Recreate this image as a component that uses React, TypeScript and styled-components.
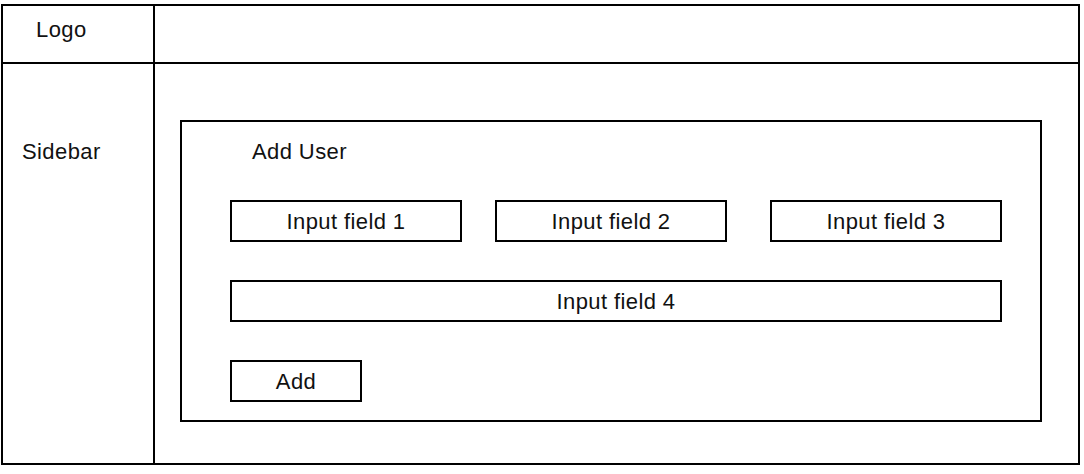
import React from 'react';
import styled, { createGlobalStyle } from 'styled-components';

const GlobalStyle = createGlobalStyle`
  body {
    margin: 0;
    background: #fff;
    font-family: "Liberation Sans", Arial, sans-serif;
    color: #111;
  }
`

type BoxProps = {
    $width: number
    $ml?: number
}

export default function App() {
    return (
        <>
            <GlobalStyle />
            <Frame>
                <LogoCell>Logo</LogoCell>
                <HeaderCell />
                <SidebarCell>Sidebar</SidebarCell>
                <Content>
                    <Card>
                        <Title>Add User</Title>
                        <FieldRow>
                            <Field $width={232}>Input field 1</Field>
                            <Field $width={232} $ml={33}>Input field 2</Field>
                            <Field $width={232} $ml={43}>Input field 3</Field>
                        </FieldRow>
                        <FieldRow>
                            <Field $width={772}>Input field 4</Field>
                        </FieldRow>
                        <FieldRow>
                            <Field $width={132}>Add</Field>
                        </FieldRow>
                    </Card>
                </Content>
            </Frame>
        </>
    );
}

const Frame = styled.div`
  box-sizing: border-box;
  margin: 4px 0 0 1px;
  width: 1079px;
  height: 461px;
  border: 2px solid #000;
  display: grid;
  grid-template-columns: 152px 1fr;
  grid-template-rows: 58px 1fr;
  font-size: 22px;
  letter-spacing: 0.4px;
`
const LogoCell = styled.div`
  border-right: 2px solid #000;
  border-bottom: 2px solid #000;
  padding: 11px 0 0 33px;
  line-height: 26px;
`
const HeaderCell = styled.div`
  border-bottom: 2px solid #000;
`
const SidebarCell = styled.div`
  position: relative;
  border-right: 2px solid #000;
  padding: 75px 0 0 19px;
  line-height: 26px;

  &::after {
    content: '';
    position: absolute;
    right: -2px;
    bottom: -9px;
    width: 2px;
    height: 9px;
    background: #000;
  }
`
const Content = styled.div`
  padding: 56px 0 0 25px;
`
const Card = styled.div`
  box-sizing: border-box;
  width: 862px;
  height: 302px;
  border: 2px solid #000;
  padding: 17px 0 0 48px;
  display: flex;
  flex-direction: column;
  gap: 38px;
`
const Title = styled.div`
  padding-left: 22px;
  line-height: 26px;
  margin-bottom: -3px;
`
const FieldRow = styled.div`
  display: flex;
`
const Field = styled.div<BoxProps>`
  box-sizing: border-box;
  width: ${p => p.$width}px;
  margin-left: ${p => p.$ml ?? 0}px;
  height: 42px;
  border: 2px solid #000;
  display: flex;
  align-items: center;
  justify-content: center;
  padding-top: 1px;
`
